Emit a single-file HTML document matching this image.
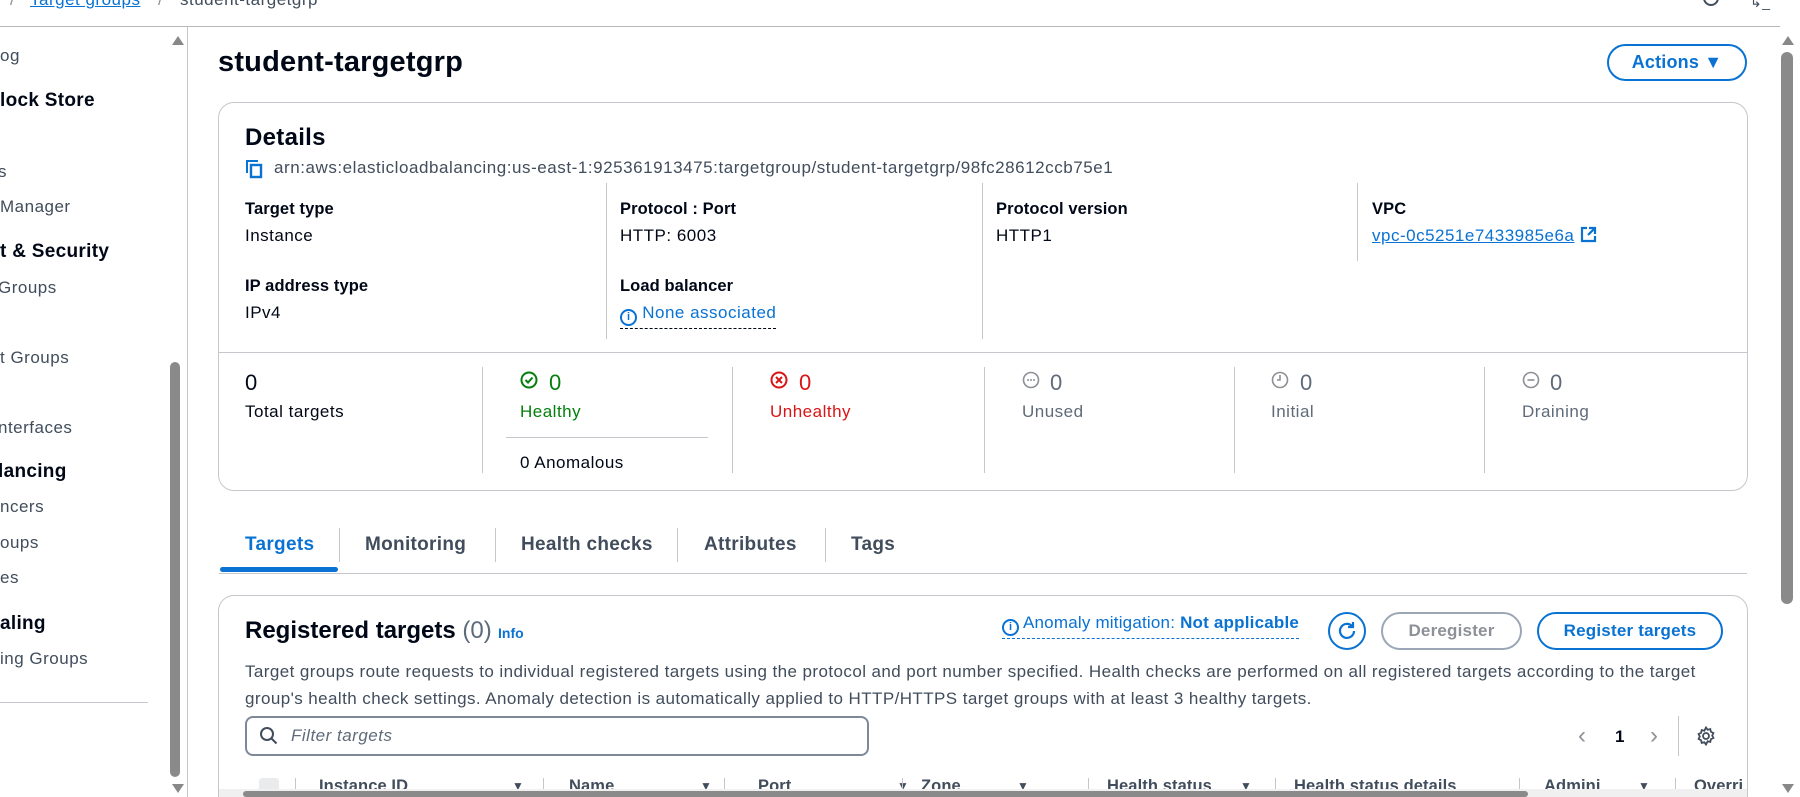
<!DOCTYPE html>
<html style="width:1800px;height:797px;overflow:hidden"><head><meta charset="utf-8"><style>
*{box-sizing:border-box;margin:0;padding:0}
body{width:1800px;height:797px;overflow:hidden;background:#fff;font-family:"Liberation Sans",sans-serif;color:#000716;position:relative;font-size:17px;letter-spacing:0.5px}
.a{position:absolute;white-space:nowrap}
.b{font-weight:bold;font-size:16.5px;letter-spacing:0.1px}
.lnk{color:#0972d3}
.g{color:#5f6b7a}
.vl{position:absolute;width:1px;background:#c6c6cd}
.hl{position:absolute;height:1px;background:#c6c6cd}
.t{font-size:19px;font-weight:bold;letter-spacing:0.3px;color:#414d5c}
.ii{display:inline-block;width:17px;height:17px;border:2px solid #0972d3;border-radius:50%;font-size:11px;text-align:center;line-height:13px;font-weight:bold;vertical-align:-2px;letter-spacing:0}
</style></head><body>
<div class="a" style="left:10px;top:-10px;color:#8d9096">/</div>
<div class="a lnk" style="left:30px;top:-10px;text-decoration:underline">Target groups</div>
<div class="a" style="left:158px;top:-10px;color:#8d9096">/</div>
<div class="a" style="left:180px;top:-10px;color:#414d5c">student-targetgrp</div>
<div class="a" style="left:1703px;top:-8px;width:16px;height:14px;border:2px solid #414d5c;border-radius:0 0 8px 8px"></div>
<div class="a" style="left:1750px;top:-6px;font-size:14px;color:#414d5c">↳_</div>
<div class="hl" style="left:0;top:26px;width:1780px;background:#b8b8b8"></div>
<div class="vl" style="left:187px;top:27px;height:770px;background:#c6c6cd"></div>
<div class="a" style="left:172px;top:36px;width:0;height:0;border-left:6px solid transparent;border-right:6px solid transparent;border-bottom:9px solid #888"></div>
<div class="a" style="left:170px;top:362px;width:10px;height:415px;background:#8a8a8a;border-radius:5px"></div>
<div class="a" style="left:172px;top:784px;width:0;height:0;border-left:6px solid transparent;border-right:6px solid transparent;border-top:9px solid #888"></div>
<div class="a" style="left:0;top:46px;color:#414d5c">og</div>
<div class="a" style="left:0;top:90px;font-size:19px;font-weight:bold;letter-spacing:.3px">lock Store</div>
<div class="a" style="left:-2px;top:162px;color:#414d5c">s</div>
<div class="a" style="left:0;top:197px;color:#414d5c">Manager</div>
<div class="a" style="left:0;top:241px;font-size:19px;font-weight:bold;letter-spacing:.3px">t &amp; Security</div>
<div class="a" style="left:-2px;top:278px;color:#414d5c">Groups</div>
<div class="a" style="left:0;top:348px;color:#414d5c">t Groups</div>
<div class="a" style="left:-2px;top:418px;color:#414d5c">nterfaces</div>
<div class="a" style="left:-2px;top:461px;font-size:19px;font-weight:bold;letter-spacing:.3px">lancing</div>
<div class="a" style="left:0;top:497px;color:#414d5c">ncers</div>
<div class="a" style="left:0;top:533px;color:#414d5c">oups</div>
<div class="a" style="left:0;top:568px;color:#414d5c">es</div>
<div class="a" style="left:0;top:613px;font-size:19px;font-weight:bold;letter-spacing:.3px">aling</div>
<div class="a" style="left:0;top:649px;color:#414d5c">ing Groups</div>
<div class="hl" style="left:0;top:702px;width:148px"></div>
<div class="a" style="left:1782px;top:36px;width:0;height:0;border-left:6px solid transparent;border-right:6px solid transparent;border-bottom:9px solid #888"></div>
<div class="a" style="left:1781px;top:52px;width:12px;height:552px;background:#8a8a8a;border-radius:6px"></div>
<div class="a" style="left:1782px;top:784px;width:0;height:0;border-left:6px solid transparent;border-right:6px solid transparent;border-top:9px solid #888"></div>
<div class="a" style="left:218px;top:46px;font-size:29px;font-weight:bold;letter-spacing:0.2px">student-targetgrp</div>
<div class="a lnk" style="left:1607px;top:44px;width:140px;height:37px;border:2px solid #0972d3;border-radius:20px;font-size:18px;font-weight:bold;letter-spacing:.2px;text-align:center;line-height:33px">Actions ▼</div>
<div class="a" style="left:218px;top:102px;width:1530px;height:389px;border:1px solid #c6c6cd;border-radius:16px"></div>
<div class="a" style="left:245px;top:124px;font-size:24px;font-weight:bold;letter-spacing:.3px">Details</div>
<svg class="a" style="left:245px;top:159px" width="18" height="20"><path d="M2 14V2h11" fill="none" stroke="#0972d3" stroke-width="2"/><rect x="6" y="6" width="10" height="12" fill="none" stroke="#0972d3" stroke-width="2.4"/></svg>
<div class="a" style="left:274px;top:158px;color:#414d5c;letter-spacing:.55px">arn:aws:elasticloadbalancing:us-east-1:925361913475:targetgroup/student-targetgrp/98fc28612ccb75e1</div>
<div class="vl" style="left:606px;top:183px;height:156px"></div>
<div class="vl" style="left:982px;top:183px;height:156px"></div>
<div class="vl" style="left:1357px;top:183px;height:78px"></div>
<div class="a b" style="left:245px;top:200px">Target type</div>
<div class="a" style="left:245px;top:226px">Instance</div>
<div class="a b" style="left:245px;top:277px">IP address type</div>
<div class="a" style="left:245px;top:303px">IPv4</div>
<div class="a b" style="left:620px;top:200px">Protocol : Port</div>
<div class="a" style="left:620px;top:226px">HTTP: 6003</div>
<div class="a b" style="left:620px;top:277px">Load balancer</div>
<div class="a lnk" style="left:620px;top:303px;border-bottom:1px dashed #000716;padding-bottom:2px"><span class="ii">i</span> None associated</div>
<div class="a b" style="left:996px;top:200px">Protocol version</div>
<div class="a" style="left:996px;top:226px">HTTP1</div>
<div class="a b" style="left:1372px;top:200px">VPC</div>
<div class="a lnk" style="left:1372px;top:226px"><span style="text-decoration:underline">vpc-0c5251e7433985e6a</span> <svg width="17" height="17" style="vertical-align:-2px"><path d="M7 2H2v13h13v-5M9 2h6v6M15 2L8 9" fill="none" stroke="#0972d3" stroke-width="2.2"/></svg></div>
<div class="hl" style="left:219px;top:352px;width:1528px"></div>
<div class="vl" style="left:482px;top:367px;height:106px"></div>
<div class="vl" style="left:732px;top:367px;height:106px"></div>
<div class="vl" style="left:984px;top:367px;height:106px"></div>
<div class="vl" style="left:1234px;top:367px;height:106px"></div>
<div class="vl" style="left:1484px;top:367px;height:106px"></div>
<div class="a" style="left:245px;top:370px;font-size:22px">0</div>
<div class="a" style="left:245px;top:402px">Total targets</div>
<svg class="a" style="left:520px;top:371px" width="18" height="18"><circle cx="9" cy="9" r="7.5" fill="none" stroke="#037f0c" stroke-width="2"/><path d="M5.5 9l2.5 2.5 4.5-5" fill="none" stroke="#037f0c" stroke-width="2"/></svg>
<div class="a" style="left:549px;top:370px;font-size:22px;color:#037f0c">0</div>
<div class="a" style="left:520px;top:402px;color:#037f0c">Healthy</div>
<div class="hl" style="left:506px;top:437px;width:202px"></div>
<div class="a" style="left:520px;top:453px">0 Anomalous</div>
<svg class="a" style="left:770px;top:371px" width="18" height="18"><circle cx="9" cy="9" r="7.5" fill="none" stroke="#d91515" stroke-width="2"/><path d="M6 6l6 6M12 6l-6 6" stroke="#d91515" stroke-width="2"/></svg>
<div class="a" style="left:799px;top:370px;font-size:22px;color:#d91515">0</div>
<div class="a" style="left:770px;top:402px;color:#d91515">Unhealthy</div>
<svg class="a" style="left:1022px;top:371px" width="18" height="18"><circle cx="9" cy="9" r="7.5" fill="none" stroke="#8d9096" stroke-width="1.6"/><circle cx="6" cy="9" r="1" fill="#8d9096"/><circle cx="9" cy="9" r="1" fill="#8d9096"/><circle cx="12" cy="9" r="1" fill="#8d9096"/></svg>
<div class="a g" style="left:1050px;top:370px;font-size:22px">0</div>
<div class="a g" style="left:1022px;top:402px">Unused</div>
<svg class="a" style="left:1271px;top:371px" width="18" height="18"><circle cx="9" cy="9" r="7.5" fill="none" stroke="#8d9096" stroke-width="1.6"/><path d="M9 4v5H6" fill="none" stroke="#8d9096" stroke-width="1.6"/></svg>
<div class="a g" style="left:1300px;top:370px;font-size:22px">0</div>
<div class="a g" style="left:1271px;top:402px">Initial</div>
<svg class="a" style="left:1522px;top:371px" width="18" height="18"><circle cx="9" cy="9" r="7.5" fill="none" stroke="#8d9096" stroke-width="1.6"/><path d="M5.5 9h7" stroke="#8d9096" stroke-width="1.6"/></svg>
<div class="a g" style="left:1550px;top:370px;font-size:22px">0</div>
<div class="a g" style="left:1522px;top:402px">Draining</div>
<div class="a t" style="left:245px;top:534px;color:#0972d3">Targets</div>
<div class="a t" style="left:365px;top:534px">Monitoring</div>
<div class="a t" style="left:521px;top:534px">Health checks</div>
<div class="a t" style="left:704px;top:534px">Attributes</div>
<div class="a t" style="left:851px;top:534px">Tags</div>
<div class="vl" style="left:339px;top:528px;height:34px"></div>
<div class="vl" style="left:495px;top:528px;height:34px"></div>
<div class="vl" style="left:677px;top:528px;height:34px"></div>
<div class="vl" style="left:825px;top:528px;height:34px"></div>
<div class="hl" style="left:219px;top:573px;width:1528px"></div>
<div class="a" style="left:220px;top:567px;width:118px;height:5px;background:#0972d3;border-radius:3px"></div>
<div class="a" style="left:218px;top:595px;width:1530px;height:220px;border:1px solid #c6c6cd;border-radius:16px"></div>
<div class="a" style="left:245px;top:617px;font-size:24px;font-weight:bold;letter-spacing:0">Registered targets <span style="font-weight:normal;color:#5f6b7a">(0)</span></div>
<div class="a lnk" style="left:498px;top:625px;font-size:14px;font-weight:bold;letter-spacing:0">Info</div>
<div class="a lnk" style="left:1002px;top:613px;border-bottom:1px dashed #0972d3;padding-bottom:2px;letter-spacing:.2px"><span class="ii">i</span> Anomaly mitigation: <b>Not applicable</b></div>
<div class="a" style="left:1328px;top:612px;width:38px;height:38px;border:2px solid #0972d3;border-radius:50%"></div>
<svg class="a" style="left:1336px;top:620px" width="22" height="22"><path d="M16 6A7 7 0 1 0 18 11" fill="none" stroke="#0972d3" stroke-width="2.2"/><path d="M17 2v5h-5" fill="none" stroke="#0972d3" stroke-width="2.2"/></svg>
<div class="a" style="left:1381px;top:612px;width:141px;height:38px;border:2px solid #9ba7b6;border-radius:20px;color:#8d9096;text-align:center;line-height:34px;font-weight:bold;font-size:17px;letter-spacing:.2px">Deregister</div>
<div class="a lnk" style="left:1537px;top:612px;width:186px;height:38px;border:2px solid #0972d3;border-radius:20px;text-align:center;line-height:34px;font-weight:bold;font-size:17px;letter-spacing:.2px">Register targets</div>
<div class="a" style="left:245px;top:658px;color:#414d5c;line-height:27px;letter-spacing:.42px">Target groups route requests to individual registered targets using the protocol and port number specified. Health checks are performed on all registered targets according to the target<br>group's health check settings. Anomaly detection is automatically applied to HTTP/HTTPS target groups with at least 3 healthy targets.</div>
<div class="a" style="left:245px;top:716px;width:624px;height:40px;border:2px solid #7d8998;border-radius:8px"></div>
<svg class="a" style="left:259px;top:726px" width="20" height="20"><circle cx="8" cy="8" r="6" fill="none" stroke="#414d5c" stroke-width="2"/><path d="M12.5 12.5l5 5" stroke="#414d5c" stroke-width="2"/></svg>
<div class="a" style="left:291px;top:726px;font-style:italic;color:#5f6b7a">Filter targets</div>
<div class="a" style="left:1578px;top:722px;font-size:24px;color:#8d9096">‹</div>
<div class="a b" style="left:1615px;top:727px;font-size:17px">1</div>
<div class="a" style="left:1650px;top:722px;font-size:24px;color:#8d9096">›</div>
<div class="vl" style="left:1678px;top:716px;height:40px"></div>
<svg class="a" style="left:1696px;top:726px" width="20" height="20" viewBox="0 0 20 20"><path d="M10 1.5l1.6 2.2 2.7-.6.6 2.7 2.5 1.2-1.2 2.5 1.2 2.5-2.5 1.2-.6 2.7-2.7-.6L10 18.5l-1.6-2.2-2.7.6-.6-2.7-2.5-1.2 1.2-2.5-1.2-2.5 2.5-1.2.6-2.7 2.7.6z" fill="none" stroke="#414d5c" stroke-width="1.8"/><circle cx="10" cy="10" r="3" fill="none" stroke="#414d5c" stroke-width="1.8"/></svg>
<div class="a" style="left:259px;top:778px;width:20px;height:20px;background:#e9ebed;border-radius:3px"></div>
<div class="a b" style="left:319px;top:777px;color:#414d5c">Instance ID</div>
<div class="a b" style="left:569px;top:777px;color:#414d5c">Name</div>
<div class="a b" style="left:758px;top:777px;color:#414d5c">Port</div>
<div class="a b" style="left:921px;top:777px;color:#414d5c">Zone</div>
<div class="a b" style="left:1107px;top:777px;color:#414d5c">Health status</div>
<div class="a b" style="left:1294px;top:777px;color:#414d5c">Health status details</div>
<div class="a b" style="left:1544px;top:777px;color:#414d5c">Admini</div>
<div class="a b" style="left:1694px;top:777px;color:#414d5c">Overri</div>
<div class="a" style="left:512px;top:779px;font-size:12px;color:#414d5c">▼</div>
<div class="a" style="left:700px;top:779px;font-size:12px;color:#414d5c">▼</div>
<div class="a" style="left:897px;top:779px;font-size:12px;color:#414d5c">▼</div>
<div class="a" style="left:1017px;top:779px;font-size:12px;color:#414d5c">▼</div>
<div class="a" style="left:1240px;top:779px;font-size:12px;color:#414d5c">▼</div>
<div class="a" style="left:1638px;top:779px;font-size:12px;color:#414d5c">▼</div>
<div class="vl" style="left:295px;top:778px;height:21px"></div>
<div class="vl" style="left:543px;top:778px;height:21px"></div>
<div class="vl" style="left:724px;top:778px;height:21px"></div>
<div class="vl" style="left:902px;top:778px;height:21px"></div>
<div class="vl" style="left:1088px;top:778px;height:21px"></div>
<div class="vl" style="left:1275px;top:778px;height:21px"></div>
<div class="vl" style="left:1519px;top:778px;height:21px"></div>
<div class="vl" style="left:1675px;top:778px;height:21px"></div>
<div class="a" style="left:219px;top:789px;width:1528px;height:8px;background:#f0f0f0"></div>
<div class="a" style="left:243px;top:791px;width:1285px;height:6px;background:#8a8a8a;border-radius:3px"></div>
</body></html>
